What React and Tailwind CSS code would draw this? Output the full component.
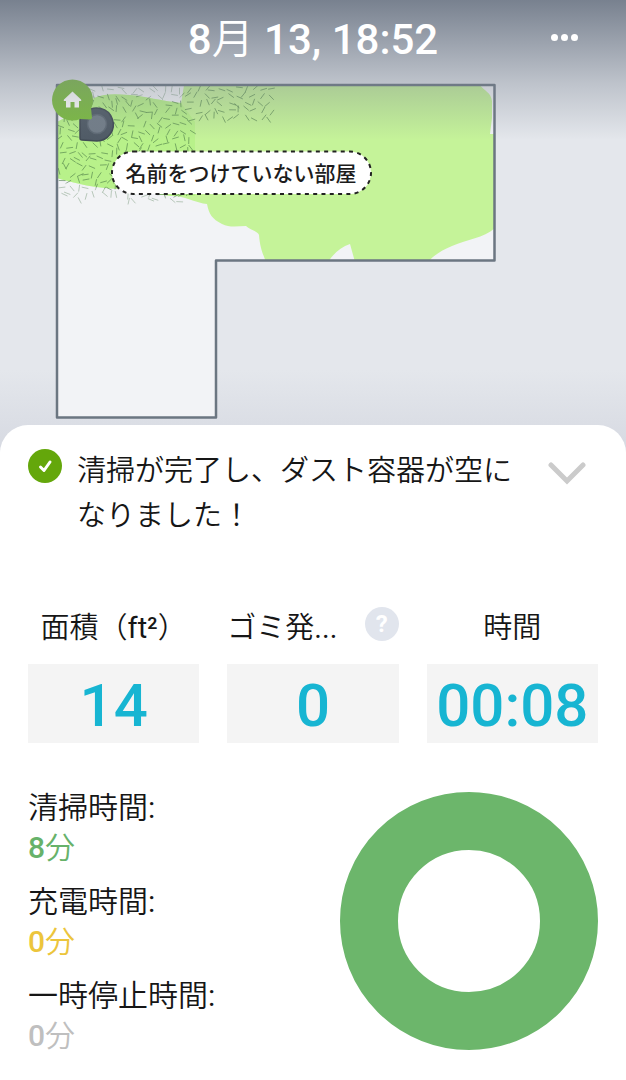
import { useState } from 'react';

const STATS = [
  { id: 'area', label: <>面積（<span className="font-normal">ft²</span>）</>, value: '14' },
  { id: 'dirt', label: <>ゴミ発<span className="font-normal">...</span></>, value: '0', help: true },
  { id: 'time', label: '時間', value: '00:08' },
];

const BREAKDOWN = [
  { id: 'clean', label: '清掃時間', minutes: 8, text: 'text-[#67b26a]', stroke: '#6cb66b' },
  { id: 'charge', label: '充電時間', minutes: 0, text: 'text-[#ecc53c]', stroke: '#ecc53c' },
  { id: 'pause', label: '一時停止時間', minutes: 0, text: 'text-[#bfbfbf]', stroke: '#bfbfbf' },
];

const ROOM = 'M57 85H494.500V260.500H216V417.500H57Z';

// Short carpet fibres on a jittered grid, same pattern on every render
function buildFibres() {
  let seed = 4211;
  const rand = () => {
    seed = (seed * 16807) % 2147483647;
    return seed / 2147483647;
  };
  const fibres = [];
  for (let y = 87; y < 204; y += 7) {
    for (let x = 59; x < 274; x += 8) {
      const cx = x + rand() * 6;
      const cy = y + rand() * 5;
      const angle = rand() * Math.PI;
      const dx = Math.cos(angle) * 3;
      const dy = Math.sin(angle) * 3;
      if (cy > 121 && cx > 193) continue;
      if (cy > 202) continue;
      fibres.push(`M${(cx - dx).toFixed(1)} ${(cy - dy).toFixed(1)}L${(cx + dx).toFixed(1)} ${(cy + dy).toFixed(1)}`);
    }
  }
  return fibres.join('');
}

const FIBRES = buildFibres();

function FloorMap() {
  return (
    <svg viewBox="0 0 626 450" className="block w-full" role="img" aria-label="清掃マップ">
      <defs>
        <clipPath id="room">
          <path d={ROOM} />
        </clipPath>
        <linearGradient id="sheetShade" x1="0" y1="0" x2="0" y2="1">
          <stop offset="0" stopColor="#d3d6df" stopOpacity="0" />
          <stop offset="1" stopColor="#d3d6df" stopOpacity="0.8" />
        </linearGradient>
      </defs>

      <rect y="370" width="626" height="80" fill="url(#sheetShade)" />
      <path d={ROOM} fill="#f2f3f6" />
      <g clipPath="url(#room)">
        <path
          d="M57 122C68 116 82 110 94 98C105 93 118 94 130 95C146 96 160 101 181 103L184 85H480C484 91 491 92 492 101V118L490 134H496V227C484 238 468 239 452 246C442 250 434 255 428 262H355L350 244C341 247 334 253 328 262H266C263 254 260 248 259 235C258 231 250 230 246 226C238 226 230 228 222 224C212 219 209 214 207 204C196 203 190 198 176 196C160 196 140 190 120 189C96 188 76 184 57 178Z"
          fill="#c5f399"
        />
        <path
          d="M57 122C68 116 82 110 94 98C105 93 118 94 130 95C146 96 160 101 181 103L195 122V196H176C160 196 140 190 120 189C96 188 76 184 57 178Z"
          fill="#a9ef78"
          opacity="0.45"
        />
        <path d={FIBRES} stroke="#3f7040" strokeWidth="1" strokeOpacity="0.55" strokeLinecap="round" />
        <path d="M57 181C90 188 130 192 176 199L200 206V212H57ZM57 85H184L181 101C150 99 120 90 94 96L57 120Z" fill="#f2f3f6" opacity="0.4" />
      </g>
      <path d={ROOM} fill="none" stroke="#6b7681" strokeWidth="2.500" strokeLinejoin="round" />

      {/* Robot */}
      <path d="M80 112V138Q80 140 82 140L97 141A16.500 16.500 0 1 0 86 112Z" fill="#505b66" stroke="#414b55" strokeWidth="1.500" />
      <circle cx="97" cy="124" r="9.500" fill="#727d88" stroke="#5e6974" strokeWidth="1.500" />

      {/* Dock */}
      <path d="M80 119L90 119.500Q92 119.500 92 117.500L91 108Z" fill="#7cbc40" />
      <circle cx="72.500" cy="100" r="20.500" fill="#7cbc40" />
      <path d="M72.500 91.500L81 99.500Q82 101 80 101H79V107.500H74.500V102H70.500V107.500H66V101H65Q63 101 64 99.500Z" fill="#fff" />

      {/* Room name */}
      <rect x="112" y="151.500" width="259" height="42.500" rx="21.250" fill="#fff" stroke="#222" strokeWidth="2" strokeDasharray="4 4.300" />
      <text x="241" y="181" textAnchor="middle" fontSize="21" fontWeight="500" fill="#1c1c1c">
        名前をつけていない部屋
      </text>
    </svg>
  );
}

function TimeDonut() {
  const total = BREAKDOWN.reduce((sum, item) => sum + item.minutes, 0);
  return (
    <svg viewBox="0 0 258 258" className="mt-1 w-[258px] shrink-0" role="img" aria-label="時間の内訳">
      {BREAKDOWN.filter((item) => item.minutes > 0).map((item) => (
        <circle
          key={item.id}
          cx="129"
          cy="129"
          r="100"
          fill="none"
          stroke={item.stroke}
          strokeWidth="58"
          pathLength={total}
          strokeDasharray={item.minutes === total ? undefined : `${item.minutes} ${total}`}
        />
      ))}
    </svg>
  );
}

export default function App() {
  const [expanded, setExpanded] = useState(true);

  return (
    <main
      lang="ja"
      className="min-h-screen bg-[#e4e7ec] font-[Roboto,'Noto_Sans_CJK_JP',sans-serif] text-[#161616]"
    >
      <section className="relative">
        <FloorMap />
        {/* The header fades out over the map */}
        <header className="absolute inset-x-0 top-0 grid h-[140px] grid-cols-[1fr_auto_1fr] items-start bg-linear-to-b from-[#78818f] via-[#78818f]/35 via-60% to-[#78818f]/0 px-7 pt-3 text-white">
          <h1 className="col-start-2 text-[42px] leading-[56px] font-medium">
            8<span className="font-[350]">月</span> 13, 18:52
          </h1>
          <button type="button" aria-label="メニュー" className="mr-5 flex h-[50px] items-center gap-[3px] justify-self-end">
            <span className="size-[7px] rounded-full bg-white" />
            <span className="size-[7px] rounded-full bg-white" />
            <span className="size-[7px] rounded-full bg-white" />
          </button>
        </header>
      </section>

      <section className="relative -mt-[25px] rounded-t-[28px] bg-white px-7 pt-6 pb-6 text-[29px]">
        <div className="flex items-start">
          <svg viewBox="0 0 34 34" className="size-[34px] shrink-0" aria-hidden="true">
            <circle cx="17" cy="17" r="17" fill="#64a70b" />
            <path d="M12.500 18L16 21.500L22 13" fill="none" stroke="#fff" strokeWidth="3" strokeLinecap="round" strokeLinejoin="round" />
          </svg>
          <p className="ml-[15px] flex-1 leading-[45px] font-[350]">清掃が完了し、ダスト容器が空になりました！</p>
          <button
            type="button"
            aria-label="詳細"
            aria-expanded={expanded}
            onClick={() => setExpanded(!expanded)}
            className="mt-3 mr-3 ml-5 shrink-0"
          >
            <svg viewBox="0 0 38 26" className="w-[38px]" fill="none" stroke="#cbcbcb" strokeWidth="5">
              <path d="M3 4L19 20L35 4" strokeLinecap="round" />
            </svg>
          </button>
        </div>

        {expanded && (
          <>
            <div className="mt-[68px] grid grid-cols-3 gap-7">
              {STATS.map((stat) => (
                <div key={stat.id}>
                  <div className={`flex h-11 items-center ${stat.help ? 'justify-between' : 'justify-center'}`}>
                    <h2 className="font-[350] whitespace-nowrap">{stat.label}</h2>
                    {stat.help && (
                      <button
                        type="button"
                        aria-label="ヘルプ"
                        className="flex size-[34px] items-center justify-center self-start rounded-full bg-[#e1e5ed] text-2xl font-bold text-white"
                      >
                        ?
                      </button>
                    )}
                  </div>
                  <p className="mt-[13px] bg-[#f4f4f4] pt-[5px] text-center text-[60px] leading-[74px] font-medium text-[#17b5d2]">
                    {stat.value}
                  </p>
                </div>
              ))}
            </div>

            <div className="mt-[45px] flex items-start justify-between">
              <dl className="flex flex-col gap-[14px]">
                {BREAKDOWN.map((item) => (
                  <div key={item.id} className="text-3xl leading-10">
                    <dt className="font-[350]">
                      {item.label}
                      <span className="font-normal">:</span>
                    </dt>
                    <dd className={item.text}>
                      <span className="font-medium">{item.minutes}</span>
                      <span className="font-[350]">分</span>
                    </dd>
                  </div>
                ))}
              </dl>
              <TimeDonut />
            </div>
          </>
        )}
      </section>
    </main>
  );
}
